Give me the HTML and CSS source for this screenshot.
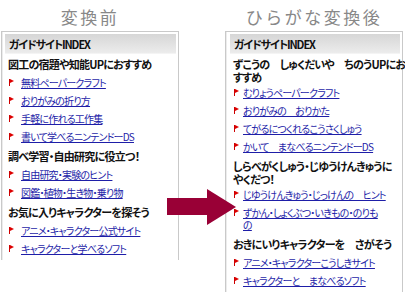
FILE: index.html
```html
<!DOCTYPE html>
<html lang="ja">
<head>
<meta charset="utf-8">
<link rel="stylesheet" href="styles.css">
</head>
<body>
<div class="page">
  <div class="col col-before">
    <h2 class="title">変換前</h2>
    <div class="box">
      <div class="box-head">ガイドサイトINDEX</div>
      <h3 class="sec">図工の宿題や知能UPにおすすめ</h3>
      <ul class="links">
        <li><a href="#">無料ペーパークラフト</a></li>
        <li><a href="#">おりがみの折り方</a></li>
        <li><a href="#">手軽に作れる工作集</a></li>
        <li><a href="#">書いて学べるニンテンドーDS</a></li>
      </ul>
      <h3 class="sec">調べ学習・自由研究に役立つ！</h3>
      <ul class="links">
        <li><a href="#">自由研究・実験のヒント</a></li>
        <li><a href="#">図鑑・植物・生き物・乗り物</a></li>
      </ul>
      <h3 class="sec">お気に入りキャラクターを探そう</h3>
      <ul class="links">
        <li><a href="#">アニメ・キャラクター公式サイト</a></li>
        <li><a href="#">キャラクターと学べるソフト</a></li>
      </ul>
    </div>
  </div>
  <div class="col col-after">
    <h2 class="title">ひらがな変換後</h2>
    <div class="box">
      <div class="box-head">ガイドサイトINDEX</div>
      <h3 class="sec sec-multi">ずこうの　しゅくだいや　ちのうUPにお<br>すすめ</h3>
      <ul class="links">
        <li><a href="#">むりょうペーパークラフト</a></li>
        <li><a href="#">おりがみの　おりかた</a></li>
        <li><a href="#">てがるにつくれるこうさくしゅう</a></li>
        <li><a href="#">かいて　まなべるニンテンドーDS</a></li>
      </ul>
      <h3 class="sec sec-multi">しらべがくしゅう・じゆうけんきゅうに<br>やくだつ！</h3>
      <ul class="links">
        <li><a href="#">じゆうけんきゅう・じっけんの　ヒント</a></li>
        <li><a href="#">ずかん・しょくぶつ・いきもの・のりも<br>の</a></li>
      </ul>
      <h3 class="sec">おきにいりキャラクターを　さがそう</h3>
      <ul class="links">
        <li><a href="#">アニメ・キャラクターこうしきサイト</a></li>
        <li><a href="#">キャラクターと　まなべるソフト</a></li>
      </ul>
    </div>
  </div>
  <svg class="arrow" width="70" height="37" viewBox="0 0 70 37" aria-hidden="true">
    <rect x="0" y="9" width="41" height="17" fill="#990036"/>
    <polygon points="40,0 69,18 40,36" fill="#990036"/>
  </svg>
</div>
</body>
</html>
```
FILE: styles.css
```css
html, body {
  margin: 0;
  padding: 0;
  background: #fff;
}
body {
  width: 405px;
  height: 296px;
  overflow: hidden;
  font-family: "Noto Sans CJK JP", sans-serif;
  font-size: 11px;
  color: #111;
  font-feature-settings: "palt";
}
.page {
  position: relative;
  display: flex;
  gap: 46px;
  padding-left: 1px;
}
.col {
  width: 178px;
  display: flex;
  flex-direction: column;
}
.title {
  margin: 0;
  height: 31px;
  line-height: 33px;
  text-align: center;
  font-size: 17px;
  font-weight: normal;
  letter-spacing: 2.5px;
  color: #888;
  font-feature-settings: normal;
}
.box {
  border: 1px solid #c9c9c9;
  border-bottom: none;
  padding: 1px 2px 2px 3px;
  box-shadow: inset 1px 0 0 #ececec;
}
.col-after .box {
  padding-left: 4px;
  padding-right: 2px;
}
.box-head {
  margin-top: 1px;
  height: 20px;
  line-height: 20px;
  padding-left: 4px;
  font-weight: bold;
  letter-spacing: -1.1px;
  background: linear-gradient(#d6d6d6, #ececec);
  border-bottom: 1px solid #f4f4f4;
  box-sizing: border-box;
}
.sec {
  margin: 0;
  padding: 3.5px 0 3.5px 3px;
  line-height: 13px;
  font-size: 11px;
  font-weight: bold;
  letter-spacing: -0.75px;
  white-space: nowrap;
}
.sec-multi {
  padding-bottom: 0.5px;
}
.links {
  list-style: none;
  margin: 0;
  padding: 0;
}
.links li {
  position: relative;
  padding: 3px 0 3px 16px;
  line-height: 12px;
  font-size: 10px;
  letter-spacing: -0.8px;
  white-space: nowrap;
}
.col-after .links li {
  padding-left: 13px;
}
.links li::before {
  content: "";
  position: absolute;
  left: 4px;
  top: 5px;
  width: 1px;
  height: 7px;
  background: #cc0000;
}
.links li::after {
  content: "";
  position: absolute;
  left: 5px;
  top: 5px;
  border-left: 4px solid #dd0000;
  border-top: 2px solid transparent;
  border-bottom: 2px solid transparent;
}
.links a {
  color: #1e1ea8;
  text-decoration: underline;
}
.arrow {
  position: absolute;
  left: 167px;
  top: 189px;
}
```
